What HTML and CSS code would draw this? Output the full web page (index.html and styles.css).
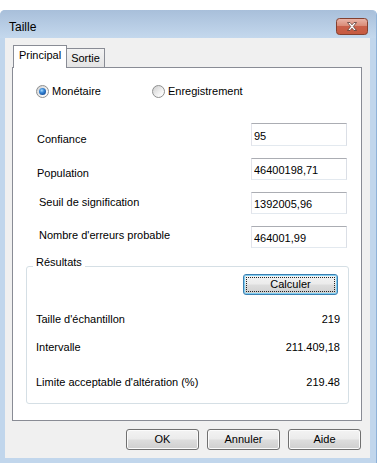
FILE: index.html
```html
<!DOCTYPE html>
<html lang="fr">
<head>
<meta charset="utf-8">
<title>Taille</title>
<link rel="stylesheet" href="styles.css">
</head>
<body>
<div class="window">
  <div class="titlebar">
    <span class="title">Taille</span>
    <span class="close" aria-label="Fermer">
      <svg width="32" height="17" viewBox="0 0 32 17">
        <defs>
          <linearGradient id="cg" x1="0" y1="0" x2="0" y2="1">
            <stop offset="0" stop-color="#eab7ab"/>
            <stop offset="0.45" stop-color="#da8c78"/>
            <stop offset="0.5" stop-color="#c9604a"/>
            <stop offset="1" stop-color="#c65a40"/>
          </linearGradient>
        </defs>
        <rect x="0.5" y="0.5" width="31" height="16" rx="3" fill="url(#cg)" stroke="#83402f"/>
        <path d="M11.5 4.5 H14 L16 6.8 L18 4.5 H20.5 L17.3 8.5 L20.5 12.5 H18 L16 10.2 L14 12.5 H11.5 L14.7 8.5 Z" fill="#fff" stroke="#5a3a33" stroke-width="0.8" stroke-linejoin="round"/>
      </svg>
    </span>
  </div>
  <div class="client">
    <div class="tabs">
      <div class="tab active">Principal</div>
      <div class="tab inactive">Sortie</div>
    </div>
    <div class="panel">
      <div class="radios">
        <div class="radio first"><span class="dot checked"></span>Monétaire</div>
        <div class="radio"><span class="dot"></span>Enregistrement</div>
      </div>
      <div class="fields">
        <div class="field f1"><span class="lbl">Confiance</span><input class="txt" type="text" value="95" readonly></div>
        <div class="field f2"><span class="lbl">Population</span><input class="txt" type="text" value="46400198,71" readonly></div>
        <div class="field f3"><span class="lbl">Seuil de signification</span><input class="txt" type="text" value="1392005,96" readonly></div>
        <div class="field f4"><span class="lbl">Nombre d'erreurs probable</span><input class="txt" type="text" value="464001,99" readonly></div>
      </div>
      <div class="group">
        <div class="legend">Résultats</div>
        <div class="calc-row"><button class="btn default">Calculer</button></div>
        <div class="res r1"><span>Taille d'échantillon</span><span>219</span></div>
        <div class="res r2"><span>Intervalle</span><span>211.409,18</span></div>
        <div class="res r3"><span>Limite acceptable d'altération (%)</span><span>219.48</span></div>
      </div>
    </div>
    <div class="actions">
      <button class="btn">OK</button>
      <button class="btn">Annuler</button>
      <button class="btn">Aide</button>
    </div>
  </div>
</div>
</body>
</html>
```
FILE: styles.css
```css
html, body {
  margin: 0;
  background: #fff;
}
body {
  font: 11px/13px "Liberation Sans", Arial, sans-serif;
  color: #000;
}
.window {
  margin-top: 10px;
  width: 377px;
  height: 453px;
  box-sizing: border-box;
  background: #c1d6ec;
  padding: 0 6px 5px 5px;
  display: flex;
  flex-direction: column;
  border-radius: 5px 5px 0 0;
  border-right: 1px solid #8fb2d8;
}
.titlebar {
  height: 28px;
  flex: none;
  margin: 0 -6px 0 -5px;
  padding: 0 8px 0 9px;
  box-sizing: border-box;
  background: linear-gradient(#a8bfda, #c4d8ed);
  border-radius: 5px 5px 0 0;
  display: flex;
  align-items: flex-start;
  justify-content: space-between;
}
.title {
  font-size: 12px;
  line-height: 14px;
  margin-top: 10px;
}
.close {
  margin-top: 8px;
  width: 32px;
  height: 17px;
  display: block;
}
.close svg { display: block; }
.client {
  flex: 1;
  background: #f0f0f0;
  padding: 7px 9px 0 7px;
  display: flex;
  flex-direction: column;
}
.tabs {
  display: flex;
  align-items: flex-end;
  height: 23px;
  margin: 0 0 -1px 1px;
  position: relative;
  z-index: 1;
}
.tab {
  box-sizing: border-box;
  border: 1px solid #898c95;
  text-align: center;
  padding-top: 3px;
}
.tab.active {
  width: 54px;
  height: 23px;
  background: #fff;
  border-bottom: none;
}
.tab.inactive {
  width: 38px;
  height: 20px;
  padding-top: 3px;
  background: linear-gradient(#f3f3f3, #e4e4e4);
  border-left: none;
}
.panel {
  width: 350px;
  height: 354px;
  box-sizing: border-box;
  background: #fff;
  border: 1px solid #898c95;
  padding: 15px 12px 0 13px;
}
.radios {
  display: flex;
  align-items: center;
  height: 16px;
  padding-left: 10px;
}
.radio {
  display: flex;
  align-items: center;
  gap: 3px;
}
.radio.first { width: 116px; }
.dot {
  width: 13px;
  height: 13px;
  box-sizing: border-box;
  border-radius: 50%;
  border: 1px solid #8e8f8f;
  background: linear-gradient(135deg, #cfcfcf, #f7f7f7 70%, #ffffff);
  display: flex;
  align-items: center;
  justify-content: center;
}
.dot.checked::after {
  content: "";
  width: 7px;
  height: 7px;
  border-radius: 50%;
  background: radial-gradient(circle at 40% 35%, #a9dcff 0, #3b8ad8 35%, #1652a0 75%, #0c3c80 100%);
}
.fields {
  margin-top: 24px;
  display: flex;
  flex-direction: column;
  gap: 12px;
}
.field {
  display: flex;
  align-items: flex-start;
  height: 22px;
}
.field.f1 { height: 23px; }
.lbl { margin-left: 11px; }
.f1 .lbl { margin-top: 10px; }
.f2 .lbl { margin-top: 9px; }
.f3 .lbl { margin-top: 4px; margin-left: 13px; }
.f4 .lbl { margin-top: 3px; margin-left: 13px; }
.txt {
  margin: 0 2px 0 auto;
  width: 96px;
  height: 100%;
  box-sizing: border-box;
  border: 1px solid;
  border-color: #abadb3 #dbdfe6 #e3e9ef #e2e3ea;
  padding: 2px 2px 0 2px;
  font: 11px/13px "Liberation Sans", Arial, sans-serif;
  color: #000;
  background: #fff;
  outline: none;
  vertical-align: top;
  display: block;
}
.f1 .txt { padding-top: 3px; }
.group {
  margin-top: 18px;
  height: 138px;
  box-sizing: border-box;
  border: 1px solid #d5dfe5;
  border-radius: 3px;
  padding: 0 8px 0 9px;
}
.legend {
  width: fit-content;
  margin: -11px 0 0 -3px;
  padding: 0 3px;
  background: #fff;
}
.calc-row {
  display: flex;
  justify-content: flex-end;
  margin-top: 5px;
  padding-right: 2px;
}
.btn {
  font: 11px/13px "Liberation Sans", Arial, sans-serif;
  color: #000;
  width: 73px;
  height: 21px;
  padding: 0;
  border: 1px solid #707070;
  border-radius: 3px;
  background: linear-gradient(#f3f3f3 0%, #ebebeb 48%, #dddddd 52%, #cfcfcf 100%);
  box-shadow: inset 0 0 0 1px #fbfbfb;
}
.btn.default {
  width: 95px;
  border-color: #3c7fb1;
  box-shadow: inset 0 0 0 1px #7fcff3;
  outline: 1px dotted #222;
  outline-offset: -4px;
}
.res {
  display: flex;
  justify-content: space-between;
}
.r1 { margin-top: 18px; }
.r2 { margin-top: 15px; }
.r3 { margin-top: 22px; }
.actions {
  display: flex;
  justify-content: flex-end;
  gap: 8px;
  margin-top: 8px;
}
```
